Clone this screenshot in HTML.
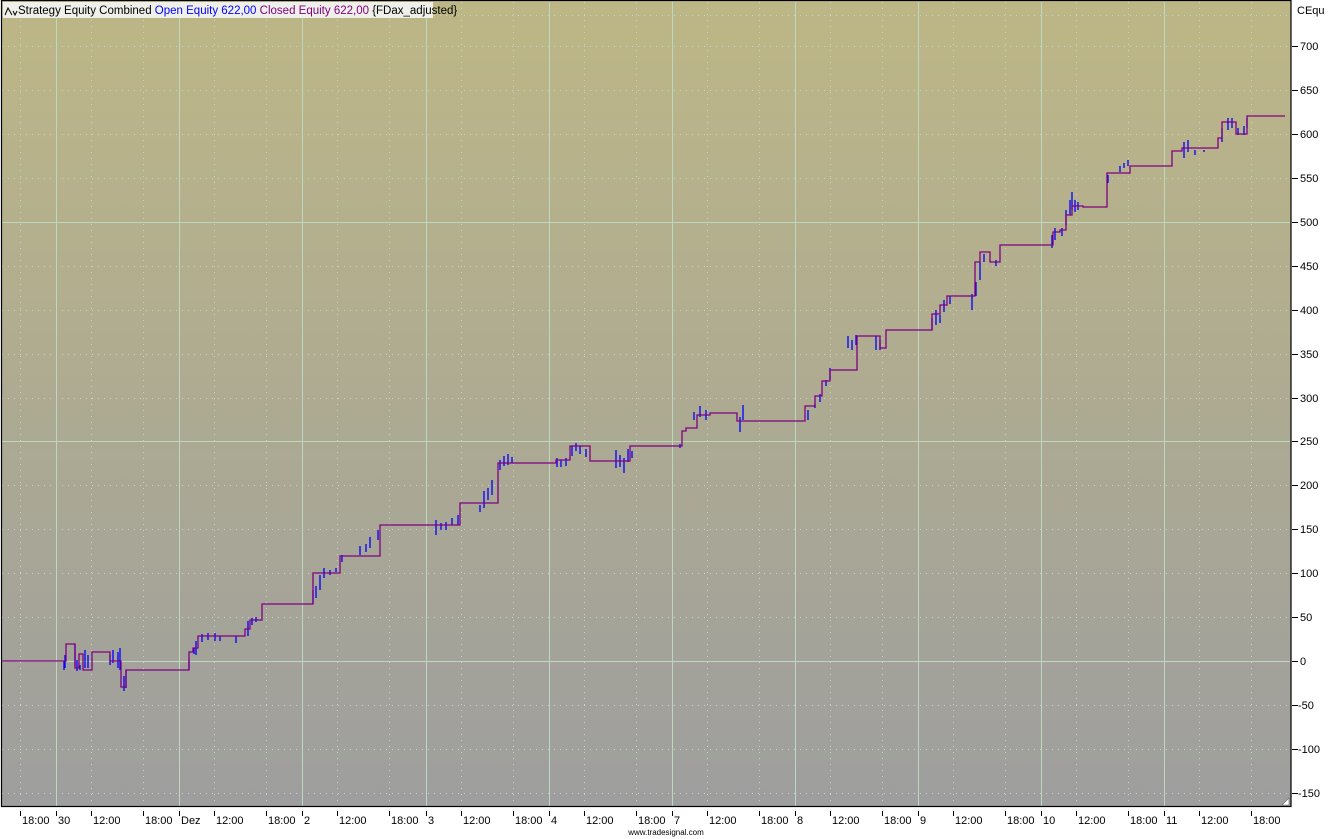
<!DOCTYPE html>
<html><head><meta charset="utf-8"><style>
html,body{margin:0;padding:0;background:#fff;width:1334px;height:839px;overflow:hidden;font-family:"Liberation Sans",sans-serif}
svg{position:absolute;left:0;top:0}
</style></head><body>
<svg width="1334" height="839" xmlns="http://www.w3.org/2000/svg">
<defs>
<linearGradient id="bg" x1="0" y1="0" x2="0" y2="1">
<stop offset="0" stop-color="#bdb786"/>
<stop offset="1" stop-color="#9e9e9e"/>
</linearGradient>
</defs>
<rect x="1" y="0" width="1290" height="807" fill="url(#bg)"/>
<!-- dotted horizontal -->
<g stroke="#c8d4c4" stroke-width="1" stroke-dasharray="1,5">
<line x1="2" x2="1290" y1="46.5" y2="46.5"/><line x1="2" x2="1290" y1="90.5" y2="90.5"/>
<line x1="2" x2="1290" y1="134.5" y2="134.5"/><line x1="2" x2="1290" y1="178.5" y2="178.5"/>
<line x1="2" x2="1290" y1="266.5" y2="266.5"/><line x1="2" x2="1290" y1="310.5" y2="310.5"/>
<line x1="2" x2="1290" y1="354.5" y2="354.5"/><line x1="2" x2="1290" y1="398.5" y2="398.5"/>
<line x1="2" x2="1290" y1="485.5" y2="485.5"/><line x1="2" x2="1290" y1="529.5" y2="529.5"/>
<line x1="2" x2="1290" y1="573.5" y2="573.5"/><line x1="2" x2="1290" y1="617.5" y2="617.5"/>
<line x1="2" x2="1290" y1="705.5" y2="705.5"/><line x1="2" x2="1290" y1="749.5" y2="749.5"/>
<line x1="2" x2="1290" y1="793.5" y2="793.5"/><line x1="2" x2="1290" y1="15.5" y2="15.5"/>
</g>
<g stroke="#c8d4c4" stroke-width="1" stroke-dasharray="1,5">
<line x1="20.5" x2="20.5" y1="2" y2="806"/><line x1="91.5" x2="91.5" y1="2" y2="806"/>
<line x1="143.5" x2="143.5" y1="2" y2="806"/><line x1="214.5" x2="214.5" y1="2" y2="806"/>
<line x1="266.5" x2="266.5" y1="2" y2="806"/><line x1="337.5" x2="337.5" y1="2" y2="806"/>
<line x1="389.5" x2="389.5" y1="2" y2="806"/><line x1="461.5" x2="461.5" y1="2" y2="806"/>
<line x1="513.5" x2="513.5" y1="2" y2="806"/><line x1="584.5" x2="584.5" y1="2" y2="806"/>
<line x1="636.5" x2="636.5" y1="2" y2="806"/><line x1="707.5" x2="707.5" y1="2" y2="806"/>
<line x1="759.5" x2="759.5" y1="2" y2="806"/><line x1="830.5" x2="830.5" y1="2" y2="806"/>
<line x1="882.5" x2="882.5" y1="2" y2="806"/><line x1="953.5" x2="953.5" y1="2" y2="806"/>
<line x1="1005.5" x2="1005.5" y1="2" y2="806"/><line x1="1076.5" x2="1076.5" y1="2" y2="806"/>
<line x1="1128.5" x2="1128.5" y1="2" y2="806"/><line x1="1199.5" x2="1199.5" y1="2" y2="806"/>
<line x1="1251.5" x2="1251.5" y1="2" y2="806"/>
</g>
<!-- solid grid -->
<g stroke="#bcd8c0" stroke-width="1">
<line x1="2" x2="1290" y1="222.5" y2="222.5"/><line x1="2" x2="1290" y1="441.5" y2="441.5"/><line x1="2" x2="1290" y1="661.5" y2="661.5"/>
<line x1="56.5" x2="56.5" y1="2" y2="806"/><line x1="179.5" x2="179.5" y1="2" y2="806"/>
<line x1="302.5" x2="302.5" y1="2" y2="806"/><line x1="426.5" x2="426.5" y1="2" y2="806"/>
<line x1="549.5" x2="549.5" y1="2" y2="806"/><line x1="672.5" x2="672.5" y1="2" y2="806"/>
<line x1="795.5" x2="795.5" y1="2" y2="806"/><line x1="918.5" x2="918.5" y1="2" y2="806"/>
<line x1="1041.5" x2="1041.5" y1="2" y2="806"/><line x1="1164.5" x2="1164.5" y1="2" y2="806"/>
</g>
<!-- blue open equity -->
<path fill="none" stroke="#0000ff" stroke-width="1.3" d="M64 661 V670 M65 655 V668 M75 644 V666 M77 660 V671 M80 665 V670 M85 650 V668 M88 655 V668 M110 655 V665 M113 650 V663 M118 652 V668 M120 648 V670 M124 676 V691 M126 670 V688 M189 660 V670 M194 648 V654 M196 641 V655 M202 634 V642 M208 633 V640 M215 633 V641 M220 636 V641 M236 636 V643 M248 621 V636 M252 618 V625 M256 617 V622 M313 590 V604 M316 586 V598 M320 575 V590 M324 568 V578 M330 570 V575 M336 568 V572 M342 555 V562 M360 546 V555 M366 544 V552 M370 537 V548 M378 530 V540 M436 520 V535 M441 523 V530 M446 522 V530 M452 518 V525 M458 515 V525 M480 505 V512 M484 491 V508 M488 488 V500 M492 480 V495 M500 460 V470 M504 456 V466 M508 454 V465 M512 457 V463 M557 458 V467 M561 460 V467 M566 458 V466 M572 446 V456 M576 443 V451 M580 446 V454 M586 449 V457 M616 450 V468 M620 455 V467 M624 458 V473 M628 449 V462 M632 451 V458 M680 444 V448 M694 412 V420 M700 406 V417 M706 410 V420 M740 417 V432 M743 405 V420 M808 410 V420 M815 404 V408 M820 394 V402 M826 380 V386 M830 368 V380 M848 336 V348 M852 340 V350 M856 335 V345 M876 336 V350 M880 340 V350 M932 318 V330 M936 310 V325 M940 315 V323 M944 300 V312 M950 296 V304 M972 294 V310 M976 282 V296 M980 262 V280 M984 254 V262 M996 260 V266 M1052 235 V248 M1055 228 V240 M1062 228 V236 M1066 210 V225 M1070 200 V215 M1072 192 V210 M1075 200 V212 M1078 202 V210 M1108 175 V183 M1120 166 V172 M1124 163 V168 M1128 160 V166 M1184 142 V158 M1188 140 V152 M1195 150 V155 M1204 150 V152 M1222 128 V142 M1228 118 V130 M1232 118 V128 M1238 128 V135 M1244 126 V135 M1247 118 V128"/>
<!-- purple closed equity -->
<path fill="none" stroke="#800080" stroke-width="1.3" d="M2 661 H66 V644 H75 V668 H79 V654 H83 V670 H92 V652 H110 V661 H121 V687 H126 V670 H189 V652 H193 V648 H198 V636 H245 V629 H250 V620 H262 V604 H313 V573 H340 V556 H380 V525 H460 V503 H498 V463 H556 V460 H570 V446 H590 V461 H630 V446 H682 V431 H686 V428 H697 V415 H710 V413 H737 V421 H805 V406 H815 V396 H822 V381 H830 V370 H857 V336 H880 V348 H886 V330 H932 V314 H940 V305 H947 V296 H975 V262 H980 V252 H990 V262 H1000 V245 H1053 V232 H1060 V230 H1066 V215 H1072 V206 H1083 V207 H1107 V173 H1130 V166 H1172 V151 H1182 V148 H1218 V138 H1222 V122 H1236 V134 H1247 V116 H1285"/>
<!-- border -->
<rect x="1.5" y="0.5" width="1289.5" height="806" fill="none" stroke="#000" stroke-width="1.2"/>
<path d="M1282 805 L1289 798 L1289 805 Z" fill="#fff" stroke="#666" stroke-width="0.6"/>
<!-- header -->
<rect x="3" y="2" width="430" height="16" fill="#f0f0ea"/>
<path d="M5 15 L8 8 L12 15 M13 11 L15 15 L17 11" fill="none" stroke="#000" stroke-width="1"/>
<text x="18" y="14" font-size="11.5" fill="#000">Strategy Equity Combined <tspan fill="#0000ff">Open Equity 622,00</tspan> <tspan fill="#800080">Closed Equity 622,00</tspan> {FDax_adjusted}</text>
<!-- right axis -->
<g font-size="11" fill="#000">
<text x="1297" y="14">CEqu</text>
<g stroke="#000" stroke-width="1">
<line x1="1292" x2="1298" y1="46.5" y2="46.5"/><line x1="1292" x2="1298" y1="90.5" y2="90.5"/><line x1="1292" x2="1298" y1="134.5" y2="134.5"/><line x1="1292" x2="1298" y1="178.5" y2="178.5"/><line x1="1292" x2="1298" y1="222.5" y2="222.5"/><line x1="1292" x2="1298" y1="266.5" y2="266.5"/><line x1="1292" x2="1298" y1="310.5" y2="310.5"/><line x1="1292" x2="1298" y1="354.5" y2="354.5"/><line x1="1292" x2="1298" y1="398.5" y2="398.5"/><line x1="1292" x2="1298" y1="441.5" y2="441.5"/><line x1="1292" x2="1298" y1="485.5" y2="485.5"/><line x1="1292" x2="1298" y1="529.5" y2="529.5"/><line x1="1292" x2="1298" y1="573.5" y2="573.5"/><line x1="1292" x2="1298" y1="617.5" y2="617.5"/><line x1="1292" x2="1298" y1="661.5" y2="661.5"/><line x1="1292" x2="1298" y1="705.5" y2="705.5"/><line x1="1292" x2="1298" y1="749.5" y2="749.5"/><line x1="1292" x2="1298" y1="793.5" y2="793.5"/>
</g>
<text x="1300" y="50">700</text><text x="1300" y="94">650</text><text x="1300" y="138">600</text><text x="1300" y="182">550</text><text x="1300" y="226">500</text><text x="1300" y="270">450</text><text x="1300" y="314">400</text><text x="1300" y="358">350</text><text x="1300" y="402">300</text><text x="1300" y="445">250</text><text x="1300" y="489">200</text><text x="1300" y="533">150</text><text x="1300" y="577">100</text><text x="1300" y="621">50</text><text x="1300" y="665">0</text><text x="1298" y="709">-50</text><text x="1298" y="753">-100</text><text x="1298" y="797">-150</text>
</g>
<!-- bottom axis -->
<g stroke="#000" stroke-width="1">
<line x1="20.5" x2="20.5" y1="811" y2="816"/><line x1="56.5" x2="56.5" y1="811" y2="816"/><line x1="91.5" x2="91.5" y1="811" y2="816"/><line x1="143.5" x2="143.5" y1="811" y2="816"/><line x1="179.5" x2="179.5" y1="811" y2="816"/><line x1="214.5" x2="214.5" y1="811" y2="816"/><line x1="266.5" x2="266.5" y1="811" y2="816"/><line x1="302.5" x2="302.5" y1="811" y2="816"/><line x1="337.5" x2="337.5" y1="811" y2="816"/><line x1="389.5" x2="389.5" y1="811" y2="816"/><line x1="426.5" x2="426.5" y1="811" y2="816"/><line x1="461.5" x2="461.5" y1="811" y2="816"/><line x1="513.5" x2="513.5" y1="811" y2="816"/><line x1="549.5" x2="549.5" y1="811" y2="816"/><line x1="584.5" x2="584.5" y1="811" y2="816"/><line x1="636.5" x2="636.5" y1="811" y2="816"/><line x1="672.5" x2="672.5" y1="811" y2="816"/><line x1="707.5" x2="707.5" y1="811" y2="816"/><line x1="759.5" x2="759.5" y1="811" y2="816"/><line x1="795.5" x2="795.5" y1="811" y2="816"/><line x1="830.5" x2="830.5" y1="811" y2="816"/><line x1="882.5" x2="882.5" y1="811" y2="816"/><line x1="918.5" x2="918.5" y1="811" y2="816"/><line x1="953.5" x2="953.5" y1="811" y2="816"/><line x1="1005.5" x2="1005.5" y1="811" y2="816"/><line x1="1041.5" x2="1041.5" y1="811" y2="816"/><line x1="1076.5" x2="1076.5" y1="811" y2="816"/><line x1="1128.5" x2="1128.5" y1="811" y2="816"/><line x1="1164.5" x2="1164.5" y1="811" y2="816"/><line x1="1199.5" x2="1199.5" y1="811" y2="816"/><line x1="1251.5" x2="1251.5" y1="811" y2="816"/>
</g>
<g font-size="11" fill="#000">
<text x="22" y="824">18:00</text><text x="58" y="824">30</text><text x="93" y="824">12:00</text><text x="145" y="824">18:00</text><text x="181" y="824">Dez</text><text x="216" y="824">12:00</text><text x="268" y="824">18:00</text><text x="304" y="824">2</text><text x="339" y="824">12:00</text><text x="391" y="824">18:00</text><text x="428" y="824">3</text><text x="463" y="824">12:00</text><text x="515" y="824">18:00</text><text x="551" y="824">4</text><text x="586" y="824">12:00</text><text x="638" y="824">18:00</text><text x="674" y="824">7</text><text x="709" y="824">12:00</text><text x="761" y="824">18:00</text><text x="797" y="824">8</text><text x="832" y="824">12:00</text><text x="884" y="824">18:00</text><text x="920" y="824">9</text><text x="955" y="824">12:00</text><text x="1007" y="824">18:00</text><text x="1043" y="824">10</text><text x="1078" y="824">12:00</text><text x="1130" y="824">18:00</text><text x="1166" y="824">11</text><text x="1201" y="824">12:00</text><text x="1253" y="824">18:00</text>
</g>
<text x="666" y="835" font-size="8" text-anchor="middle" fill="#000">www.tradesignal.com</text>
</svg>
</body></html>
